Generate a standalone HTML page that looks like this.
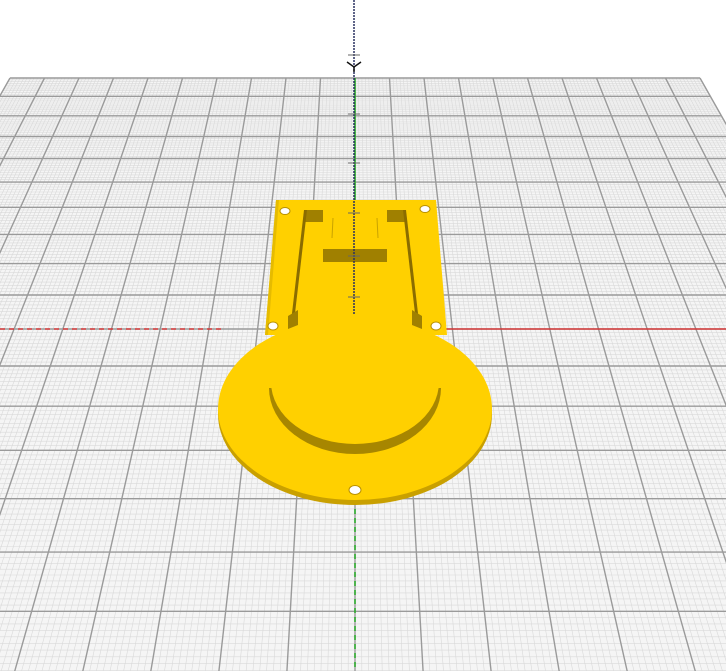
<!DOCTYPE html>
<html><head><meta charset="utf-8"><style>
html,body{margin:0;padding:0;background:#fff;width:726px;height:671px;overflow:hidden;}
svg{display:block;overflow:hidden;}
</style></head><body>
<svg id="s" width="726" height="671" viewBox="0 0 726 671" xmlns="http://www.w3.org/2000/svg">
<g id="grid"></g>
<line x1="0" y1="329" x2="222" y2="329" stroke="#d22" stroke-width="1.2" stroke-dasharray="5,4"/>
<line x1="355" y1="329" x2="726" y2="329" stroke="#d22" stroke-width="1.2"/>
<line x1="355" y1="78" x2="355" y2="329" stroke="#2a2" stroke-width="1.5"/>
<line x1="355" y1="500" x2="355" y2="671" stroke="#2a2" stroke-width="1.5" stroke-dasharray="5,4"/>
<g>
  <ellipse cx="355" cy="414" rx="137" ry="91" fill="#c9a000"/>
  <polygon points="276,200 436,200 447,335 265,335" fill="#ffd000"/>
  <polygon points="276,200 279,200 268,335 265,335" fill="#e6bb00"/>
  <ellipse cx="355" cy="409" rx="137" ry="91" fill="#ffd000"/>
  <path d="M269,388 A86,66 0 0 0 441,388 Z" fill="#a78600"/>
  <path d="M271,382 A84,62 0 0 0 439,382 Z" fill="#ffd000"/>
  <rect x="305" y="210" width="18" height="12" fill="#a08000"/>
  <rect x="387" y="210" width="18" height="12" fill="#a08000"/>
  <polygon points="304,210 307,210 294,322 291,322" fill="#8a6c00"/>
  <polygon points="403,210 406,210 419,322 416,322" fill="#8a6c00"/>
  <polygon points="288,316 298,310 298,325 288,329" fill="#a08000"/>
  <polygon points="412,310 422,316 422,329 412,325" fill="#a08000"/>
  <rect x="323" y="249" width="64" height="13" fill="#a08000"/>
  <line x1="333" y1="218" x2="332" y2="238" stroke="#c9a200" stroke-width="1"/>
  <line x1="377" y1="218" x2="378" y2="238" stroke="#c9a200" stroke-width="1"/>
  <g fill="#fff" stroke="#b89000" stroke-width="1">
    <ellipse cx="285" cy="211" rx="5" ry="3.5"/>
    <ellipse cx="425" cy="209" rx="5" ry="3.5"/>
    <ellipse cx="273" cy="326" rx="5" ry="4"/>
    <ellipse cx="436" cy="326" rx="5" ry="4"/>
    <ellipse cx="355" cy="490" rx="6" ry="4.5"/>
  </g>
</g>
<line x1="354" y1="0" x2="354" y2="315" stroke="#2a3060" stroke-width="1.5" stroke-dasharray="2,1"/>
<g stroke="#666" stroke-width="1">
  <line x1="348" y1="55" x2="360" y2="55"/>
  <line x1="348" y1="114" x2="360" y2="114"/>
  <line x1="348" y1="163" x2="360" y2="163"/>
  <line x1="348" y1="213" x2="360" y2="213"/>
  <line x1="348" y1="256" x2="360" y2="256"/>
  <line x1="348" y1="297" x2="360" y2="297"/>
</g>
<path d="M347,62 L354,67 L361,62 M354,67 L354,72" stroke="#111" stroke-width="1.5" fill="none"/>
</svg>
<script>
(function(){
var g=document.getElementById('grid');
function Y(n){return 1/(0.0016393-n*0.00004779)-532;}
function X(i,y){return 355+i*0.05656*(y+532);}
var h='';
var y0=78,y1=Y(20);
h+='<polygon points="'+X(-10,y0)+','+y0+' '+X(10,y0)+','+y0+' '+X(10,y1)+','+y1+' '+X(-10,y1)+','+y1+'" fill="#f5f5f5"/>';
var minor='',major='';
for(var k=0;k<=200;k++){var i=-10+k/10;var l='M'+X(i,y0).toFixed(1)+','+y0+'L'+X(i,y1).toFixed(1)+','+y1.toFixed(1);if(k%10==0)major+=l;else minor+=l;}
for(var k=0;k<=200;k++){var n=k/10;var y=Y(n);var l='M'+X(-10,y).toFixed(1)+','+y.toFixed(1)+'L'+X(10,y).toFixed(1)+','+y.toFixed(1);if(k%10==0)major+=l;else minor+=l;}
h+='<path d="'+minor+'" stroke="#d9d9d9" stroke-width="0.6" fill="none"/>';
h+='<path d="'+major+'" stroke="#9a9a9a" stroke-width="1.4" fill="none"/>';
g.innerHTML=h;
})();
</script>
</body></html>
